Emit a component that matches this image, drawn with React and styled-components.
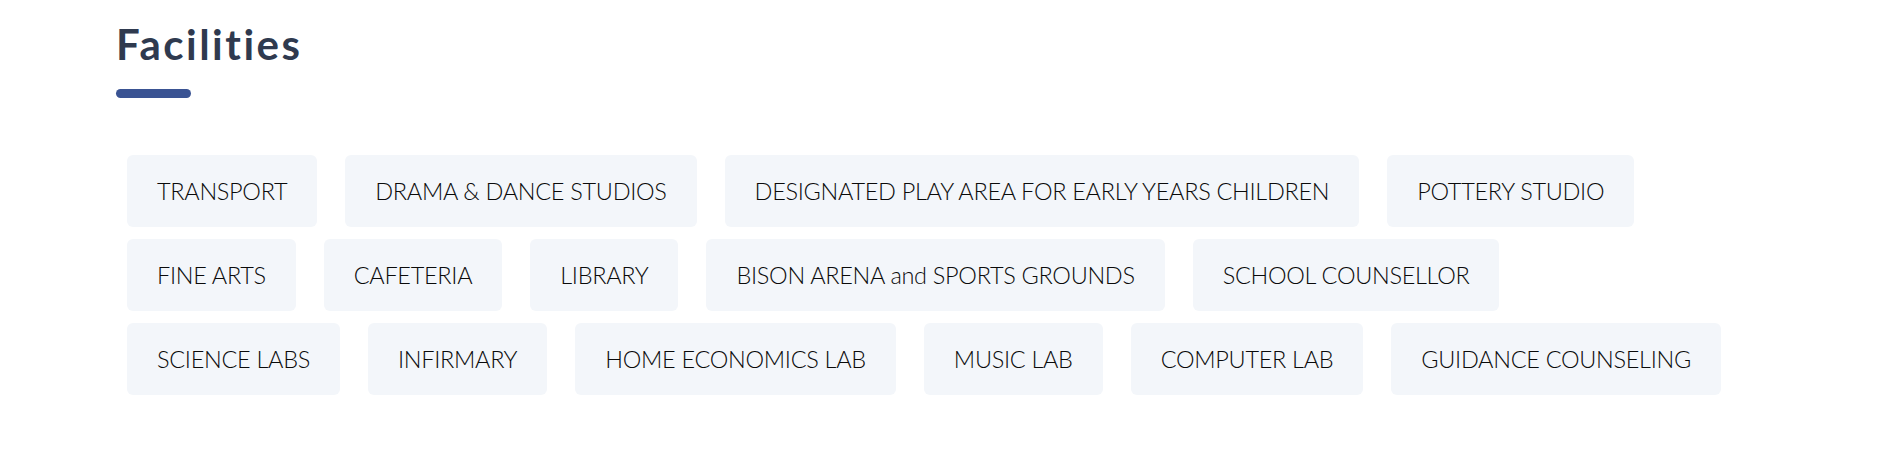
import React from "react";
import styled, { createGlobalStyle } from "styled-components";

const Global = createGlobalStyle`
  html, body { margin: 0; padding: 0; background: #ffffff; }
  body { font-family: "Lato", "Noto Sans", sans-serif; }
`;

const Section = styled.section`
  box-sizing: border-box;
  width: 1878px;
  height: 462px;
  padding: 19px 0 0 116px;
  background: #ffffff;
`;

const Title = styled.h2`
  margin: 0;
  font-family: "Lato", "Noto Sans", sans-serif;
  font-weight: 700;
  font-size: 42px;
  line-height: 1.2;
  letter-spacing: 2.5px;
  color: #2f3a4f;
`;

const Underline = styled.div`
  width: 75px;
  height: 9px;
  margin-top: 20px;
  border-radius: 5px;
  background: #3a5393;
`;

const ChipList = styled.ul`
  list-style: none;
  margin: 57px 0 0 0;
  padding: 0 0 0 11px;
  width: 1608px;
  display: flex;
  flex-wrap: wrap;
  column-gap: 28px;
  row-gap: 12px;
`;

const Chip = styled.li`
  box-sizing: border-box;
  height: 72px;
  padding: 0 30px;
  display: flex;
  align-items: center;
  background: #f3f6fa;
  border-radius: 6px;
  font-family: "Lato", "Noto Sans", sans-serif;
  font-size: 23.5px;
  font-weight: 300;
  letter-spacing: -0.3px;
  color: #0a0a0a;
  white-space: nowrap;
`;

const facilities = [
  "TRANSPORT",
  "DRAMA & DANCE STUDIOS",
  "DESIGNATED PLAY AREA FOR EARLY YEARS CHILDREN",
  "POTTERY STUDIO",
  "FINE ARTS",
  "CAFETERIA",
  "LIBRARY",
  "BISON ARENA and SPORTS GROUNDS",
  "SCHOOL COUNSELLOR",
  "SCIENCE LABS",
  "INFIRMARY",
  "HOME ECONOMICS LAB",
  "MUSIC LAB",
  "COMPUTER LAB",
  "GUIDANCE COUNSELING",
];

export default function App() {
  return (
    <>
      <Global />
      <Section>
        <Title>Facilities</Title>
        <Underline />
        <ChipList>
          {facilities.map((f) => (
            <Chip key={f}>{f}</Chip>
          ))}
        </ChipList>
      </Section>
    </>
  );
}
